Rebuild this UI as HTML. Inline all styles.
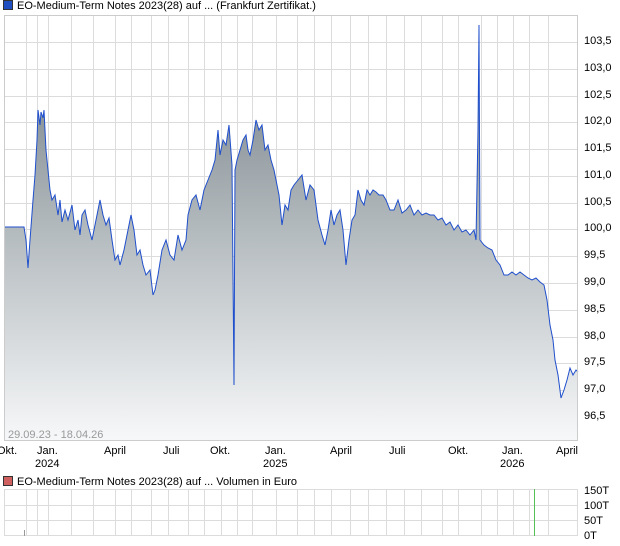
<!DOCTYPE html><html><head><style>
body{margin:0;width:620px;height:546px;background:#fff;font-family:"Liberation Sans",sans-serif;overflow:hidden;position:relative}
.t{position:absolute;font-size:11px;color:#000;white-space:nowrap}
</style></head><body>
<div class="t" style="left:3px;top:0px"><span style="display:inline-block;width:8px;height:8px;background:#1f4fc0;border:1px solid #333;vertical-align:-1px;margin-right:4px"></span>EO-Medium-Term Notes 2023(28) auf ... (Frankfurt Zertifikat.)</div>
<div class="t" style="left:3px;top:476px"><span style="display:inline-block;width:8px;height:8px;background:#d06060;border:1px solid #333;vertical-align:-1px;margin-right:4px"></span>EO-Medium-Term Notes 2023(28) auf ... Volumen in Euro</div>
<svg width="620" height="546" style="position:absolute;left:0;top:0">
<defs><linearGradient id="g" x1="0" y1="0" x2="0" y2="1"><stop offset="0" stop-color="#6f7a80"/><stop offset="0.5" stop-color="#b4bbbf"/><stop offset="1" stop-color="#f7f8f9"/></linearGradient></defs>
<g stroke="#dcdcdc" stroke-width="1">
<path d="M4.5 15V441M26.5 15V441M37.5 15V441M48.5 15V441M71.5 15V441M93.5 15V441M115.5 15V441M131.5 15V441M151.5 15V441M168.5 15V441M188.5 15V441M204.5 15V441M221.5 15V441M237.5 15V441M252.5 15V441M276.5 15V441M297.5 15V441M314.5 15V441M331.5 15V441M350.5 15V441M368.5 15V441M386.5 15V441M404.5 15V441M421.5 15V441M442.5 15V441M458.5 15V441M481.5 15V441M497.5 15V441M513.5 15V441M529.5 15V441M548.5 15V441M577.5 15V441"/>
<path d="M4 42.5H578M4 69.5H578M4 96.5H578M4 122.5H578M4 149.5H578M4 176.5H578M4 203.5H578M4 229.5H578M4 256.5H578M4 283.5H578M4 310.5H578M4 337.5H578M4 363.5H578M4 390.5H578M4 417.5H578M4 440.5H578"/>
<path d="M4.5 489V536M26.5 489V536M37.5 489V536M48.5 489V536M71.5 489V536M93.5 489V536M115.5 489V536M131.5 489V536M151.5 489V536M168.5 489V536M188.5 489V536M204.5 489V536M221.5 489V536M237.5 489V536M252.5 489V536M276.5 489V536M297.5 489V536M314.5 489V536M331.5 489V536M350.5 489V536M368.5 489V536M386.5 489V536M404.5 489V536M421.5 489V536M442.5 489V536M458.5 489V536M481.5 489V536M497.5 489V536M513.5 489V536M529.5 489V536M548.5 489V536M577.5 489V536"/>
<path d="M4 489.5H578M4 505.5H578M4 520.5H578M4 535.5H578"/>
</g>
<line x1="534.5" y1="489" x2="534.5" y2="536" stroke="#55c055"/>
<line x1="24.5" y1="530" x2="24.5" y2="536" stroke="#999"/>
<polygon fill="url(#g)" points="4,441 4,227 24,227 26,240 28,268 30,240 33,200 35,175 37,140 38,110 40,125 41,112 43,118 44,110 46,150 48,170 50,190 52,200 55,195 58,215 60,200 62,222 65,210 68,220 72,205 75,230 78,220 80,235 82,215 85,210 88,225 92,240 95,225 98,210 100,200 103,215 106,225 109,218 112,240 115,260 118,255 120,265 124,250 128,230 131,215 134,230 137,255 140,250 143,265 146,275 150,270 153,295 155,290 158,275 162,250 166,240 170,255 174,260 178,235 182,250 186,240 188,215 192,200 196,195 200,210 204,190 208,180 212,170 215,160 218,130 220,155 223,140 226,145 229,125 232,165 234,385 235,170 237,160 240,150 243,140 246,135 248,150 250,155 253,140 256,120 259,130 262,125 265,150 268,145 271,160 274,170 276,180 279,195 282,225 285,205 288,210 291,190 294,185 298,180 302,175 306,200 310,185 314,190 318,220 322,235 325,245 328,230 331,210 334,225 337,215 340,210 343,230 346,265 349,240 352,220 355,215 358,190 361,200 364,205 367,190 370,195 373,190 376,192 379,195 383,195 386,200 390,210 394,210 398,200 402,213 406,210 410,205 414,215 418,210 422,215 426,213 430,215 434,215 438,220 442,218 446,225 450,222 454,230 458,225 462,232 466,230 470,235 474,230 476,240 478,130 479,25 480,240 484,245 488,248 492,250 496,260 500,265 504,275 508,275 512,272 516,275 520,272 524,275 528,278 532,280 536,278 540,282 544,285 547,300 550,325 553,340 555,360 558,375 561,398 564,390 567,380 570,368 573,375 576,370 578,372 578,441"/>
<polyline fill="none" stroke="#1f4fcc" stroke-width="1" points="4,227 24,227 26,240 28,268 30,240 33,200 35,175 37,140 38,110 40,125 41,112 43,118 44,110 46,150 48,170 50,190 52,200 55,195 58,215 60,200 62,222 65,210 68,220 72,205 75,230 78,220 80,235 82,215 85,210 88,225 92,240 95,225 98,210 100,200 103,215 106,225 109,218 112,240 115,260 118,255 120,265 124,250 128,230 131,215 134,230 137,255 140,250 143,265 146,275 150,270 153,295 155,290 158,275 162,250 166,240 170,255 174,260 178,235 182,250 186,240 188,215 192,200 196,195 200,210 204,190 208,180 212,170 215,160 218,130 220,155 223,140 226,145 229,125 232,165 234,385 235,170 237,160 240,150 243,140 246,135 248,150 250,155 253,140 256,120 259,130 262,125 265,150 268,145 271,160 274,170 276,180 279,195 282,225 285,205 288,210 291,190 294,185 298,180 302,175 306,200 310,185 314,190 318,220 322,235 325,245 328,230 331,210 334,225 337,215 340,210 343,230 346,265 349,240 352,220 355,215 358,190 361,200 364,205 367,190 370,195 373,190 376,192 379,195 383,195 386,200 390,210 394,210 398,200 402,213 406,210 410,205 414,215 418,210 422,215 426,213 430,215 434,215 438,220 442,218 446,225 450,222 454,230 458,225 462,232 466,230 470,235 474,230 476,240 478,130 479,25 480,240 484,245 488,248 492,250 496,260 500,265 504,275 508,275 512,272 516,275 520,272 524,275 528,278 532,280 536,278 540,282 544,285 547,300 550,325 553,340 555,360 558,375 561,398 564,390 567,380 570,368 573,375 576,370 578,372"/>
<rect x="4.5" y="15.5" width="573" height="425" fill="none" stroke="#ccc"/>
<g font-family="Liberation Sans" font-size="11" fill="#000">
<text x="584" y="44">103,5</text><text x="584" y="71">103,0</text><text x="584" y="98">102,5</text><text x="584" y="124">102,0</text><text x="584" y="151">101,5</text><text x="584" y="178">101,0</text><text x="584" y="205">100,5</text><text x="584" y="231">100,0</text><text x="584" y="258">99,5</text><text x="584" y="285">99,0</text><text x="584" y="312">98,5</text><text x="584" y="339">98,0</text><text x="584" y="365">97,5</text><text x="584" y="392">97,0</text><text x="584" y="419">96,5</text>
<text x="584" y="494">150T</text><text x="584" y="509">100T</text><text x="584" y="524">50T</text><text x="584" y="539">0T</text>
<text x="-3" y="454">Okt.</text><text x="37" y="454">Jan.</text><text x="35" y="467">2024</text><text x="104" y="454">April</text><text x="163" y="454">Juli</text><text x="210" y="454">Okt.</text><text x="265" y="454">Jan.</text><text x="263" y="467">2025</text><text x="330" y="454">April</text><text x="389" y="454">Juli</text><text x="448" y="454">Okt.</text><text x="502" y="454">Jan.</text><text x="500" y="467">2026</text><text x="556" y="454">April</text>
<text x="8" y="438" fill="#999">29.09.23 - 18.04.26</text>
</g>
</svg>
</body></html>
